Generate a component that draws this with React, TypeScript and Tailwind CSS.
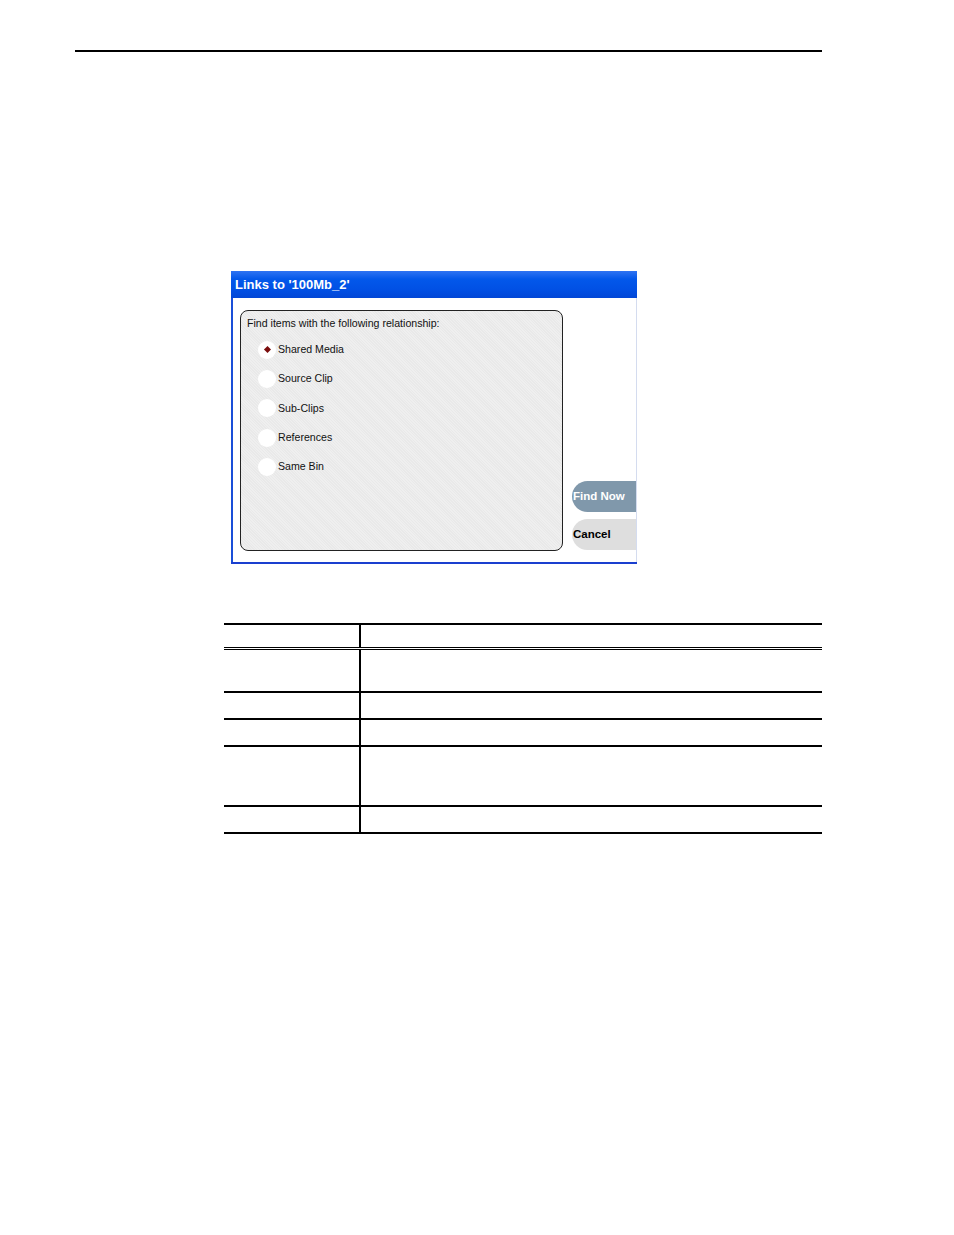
import React from 'react';

const options = ['Shared Media', 'Source Clip', 'Sub-Clips', 'References', 'Same Bin'];

const rows = [43, 27, 27, 60, 27];

export default function App() {
  return (
    <div className="min-h-[1235px] w-[954px] bg-white pt-[50px] font-['Liberation_Sans',Arial,sans-serif]">
      <div className="ml-[75px] h-[2px] w-[747px] bg-black" />

      {/* dialog */}
      <div className="ml-[231px] mt-[219px] w-[406px]">
        <div className="flex h-[27px] items-center bg-[linear-gradient(#2f73f2,#0358ea_30%,#0150e4_70%,#0247d6)] pl-[4px] text-[13px] font-bold text-white">
          Links to '100Mb_2'
        </div>
        <div className="flex border-l-2 border-r border-l-[#1a4fd8] border-r-[#d4dcef] bg-white pl-[7px] pt-[12px] pb-[11px]">
          <div className="h-[241px] w-[323px] rounded-[8px] border border-[#222] bg-[#ededed] bg-[repeating-linear-gradient(45deg,#efefef_0px,#efefef_1px,#e9e9e9_1px,#e9e9e9_2px)] px-[6px] pt-[5px] text-[10.6px] text-[#111]">
            <div>Find items with the following relationship:</div>
            <div className="mt-[9px] flex flex-col gap-[11.3px] pl-[11px]">
              {options.map((o, i) => (
                <div key={o} className="flex h-[18px] items-center gap-[2px]">
                  <div className="flex h-[18px] w-[18px] items-center justify-center rounded-full bg-white">
                    {i === 0 && <div className="h-[5px] w-[5px] rotate-45 bg-[#7a0c0c]" />}
                  </div>
                  <span>{o}</span>
                </div>
              ))}
            </div>
          </div>
          <div className="ml-[9px] flex flex-1 flex-col justify-end gap-[7px] pb-[1px]">
            <div className="flex h-[31px] items-center rounded-l-[16px] bg-[#8098ab] pl-[1px] text-[11.5px] font-bold text-white">
              Find Now
            </div>
            <div className="flex h-[31px] items-center rounded-l-[16px] bg-[#dedede] pl-[1px] text-[11.5px] font-bold text-black">
              Cancel
            </div>
          </div>
        </div>
        <div className="h-[2px] bg-[#1a3fcf]" />
      </div>

      {/* table */}
      <div className="ml-[224px] mt-[59px] w-[598px] border-t-2 border-black">
        <div className="grid h-[22px] grid-cols-[137px_1fr]">
          <div className="border-r-2 border-black" />
          <div />
        </div>
        <div className="h-[3px] border-y border-black" />
        {rows.map((h, i) => (
          <div
            key={i}
            className="grid grid-cols-[137px_1fr] border-b-2 border-black"
            style={{ height: h }}
          >
            <div className="border-r-2 border-black" />
            <div />
          </div>
        ))}
      </div>
    </div>
  );
}
